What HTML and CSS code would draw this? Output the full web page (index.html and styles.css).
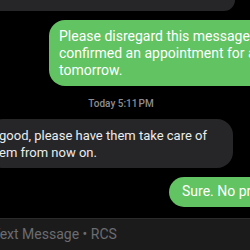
FILE: index.html
```html
<!DOCTYPE html>
<html lang="en">
<head>
  <meta charset="UTF-8">
  <meta name="viewport" content="width=device-width, initial-scale=1.0">
  <title>Messages</title>
  <link rel="stylesheet" href="styles.css">
</head>
<body>
  <div class="thread">
    <div class="bubble bubble-in bubble-top"></div>

    <div class="bubble bubble-out bubble-wide">
      Please disregard this message. I<br>
      confirmed an appointment for a<br>
      tomorrow.
    </div>

    <div class="timestamp"><span class="day">Today</span> 5:11&#8202;PM</div>

    <div class="bubble bubble-in bubble-reply">
      good, please have them take care of<br>
      em from now on.
    </div>

    <div class="bubble bubble-out bubble-pill">Sure. No problem.</div>
  </div>

  <div class="composer">
    <span class="composer-placeholder">Text Message • RCS</span>
  </div>
</body>
</html>
```

FILE: styles.css
```css
:root {
  --bg: #000000;
  --green: #61c361;
  --gray-bubble: #262628;
  --text-light: #ffffff;
  --text-muted: #8d8d92;
  --composer-bg: #1b1b1c;
}

* {
  margin: 0;
  padding: 0;
  box-sizing: border-box;
}

body {
  font-family: 'Roboto', 'Inter', sans-serif;
  background: var(--bg);
  color: var(--text-light);
  width: 250px;
  height: 250px;
  overflow: hidden;
  display: flex;
  flex-direction: column;
}

.thread {
  flex: 1;
  display: flex;
  flex-direction: column;
  overflow: hidden;
}

.bubble {
  font-size: 14px;
  line-height: 17px;
  white-space: nowrap;
  overflow: hidden;
  flex-shrink: 0;
}

.bubble-in {
  background: var(--gray-bubble);
  color: #ececec;
  border-radius: 16px;
}

.bubble-out {
  background: var(--green);
  color: var(--text-light);
  border-radius: 16px;
}

/* tail end of an earlier message, cut off by the top edge */
.bubble-top {
  height: 11px;
  width: 260px;
  margin-left: -25px;
  border-radius: 0 0 14px 14px;
}

.bubble-wide {
  margin-top: 9px;
  margin-left: 49px;
  width: 240px;
  padding: 8px 10px 7px 10px;
}

.timestamp {
  margin-top: 12px;
  padding-right: 8px;
  text-align: center;
  font-size: 10px;
  font-weight: 500;
  line-height: 12px;
  color: var(--text-muted);
}

.bubble-reply {
  margin-top: 9px;
  margin-left: -13px;
  width: 246px;
  padding: 8px 12px 7px 12px;
  font-size: 13px;
}

.bubble-pill {
  margin-top: 9px;
  margin-left: 169px;
  width: 130px;
  height: 30px;
  padding: 6px 13px;
  border-radius: 15px;
}

.composer {
  height: 32px;
  flex-shrink: 0;
  background: var(--composer-bg);
  border-top: 1px solid #2b2b2d;
  display: flex;
  align-items: center;
  overflow: hidden;
}

.composer-placeholder {
  margin-left: -8px;
  margin-bottom: 2px;
  font-size: 14px;
  white-space: nowrap;
  color: #6c6c70;
}
```
